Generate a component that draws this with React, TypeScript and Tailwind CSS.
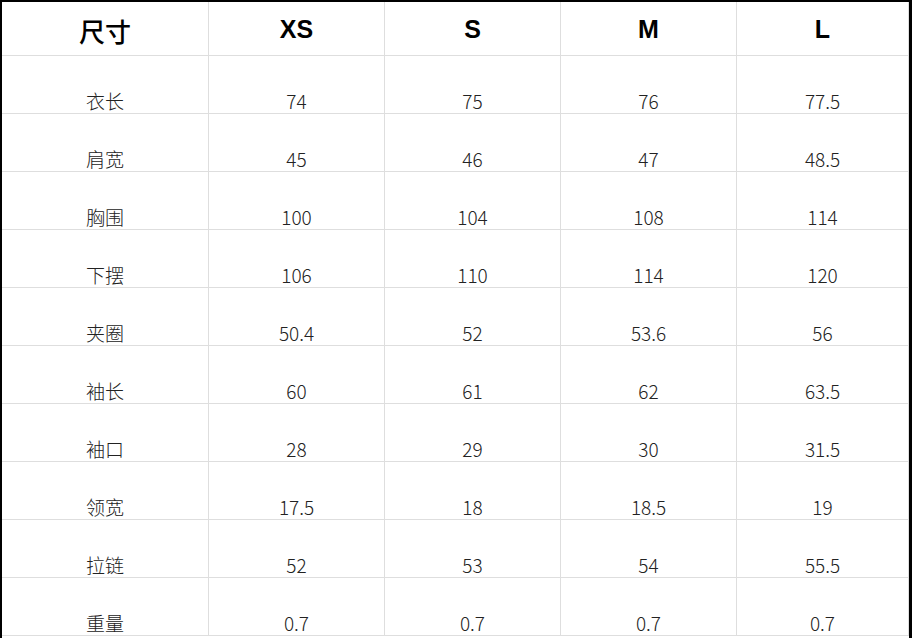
import React from 'react';

const sizes = ['XS', 'S', 'M', 'L'];

const rows: [string, string[]][] = [
  ['衣长', ['74', '75', '76', '77.5']],
  ['肩宽', ['45', '46', '47', '48.5']],
  ['胸围', ['100', '104', '108', '114']],
  ['下摆', ['106', '110', '114', '120']],
  ['夹圈', ['50.4', '52', '53.6', '56']],
  ['袖长', ['60', '61', '62', '63.5']],
  ['袖口', ['28', '29', '30', '31.5']],
  ['领宽', ['17.5', '18', '18.5', '19']],
  ['拉链', ['52', '53', '54', '55.5']],
  ['重量', ['0.7', '0.7', '0.7', '0.7']],
];

const cols = 'grid grid-cols-[207px_176px_176px_176px_172px]';

export default function App() {
  return (
    <div className="w-[912px] h-[638px] bg-white overflow-hidden">
      <div
        className="border-t-2 border-l-2 border-r-[3px] border-black h-[638px]"
        style={{ fontFamily: '"Noto Sans CJK SC", "Liberation Sans", sans-serif' }}
      >
        <div className={`${cols} h-[54px] border-b border-[#dedede]`}>
          <div className="flex items-center justify-center pt-[3px] border-r border-[#dedede] text-[26px] font-medium text-black">
            尺寸
          </div>
          {sizes.map((s) => (
            <div
              key={s}
              className="flex items-center justify-center pt-[3px] border-r border-[#dedede] text-[25px] font-bold text-black"
              style={{ fontFamily: '"Liberation Sans", Arial, sans-serif' }}
            >
              {s}
            </div>
          ))}
        </div>
        {rows.map(([label, vals]) => (
          <div key={label} className={`${cols} h-[58px] border-b border-[#dedede]`}>
            <div className="flex items-end justify-center border-r border-[#dedede] text-[19px] leading-6 font-light text-[#222]">
              {label}
            </div>
            {vals.map((v, i) => (
              <div
                key={i}
                className="flex items-end justify-center border-r border-[#dedede] text-[19px] leading-6 font-light text-[#222]"
              >
                {v}
              </div>
            ))}
          </div>
        ))}
      </div>
    </div>
  );
}
